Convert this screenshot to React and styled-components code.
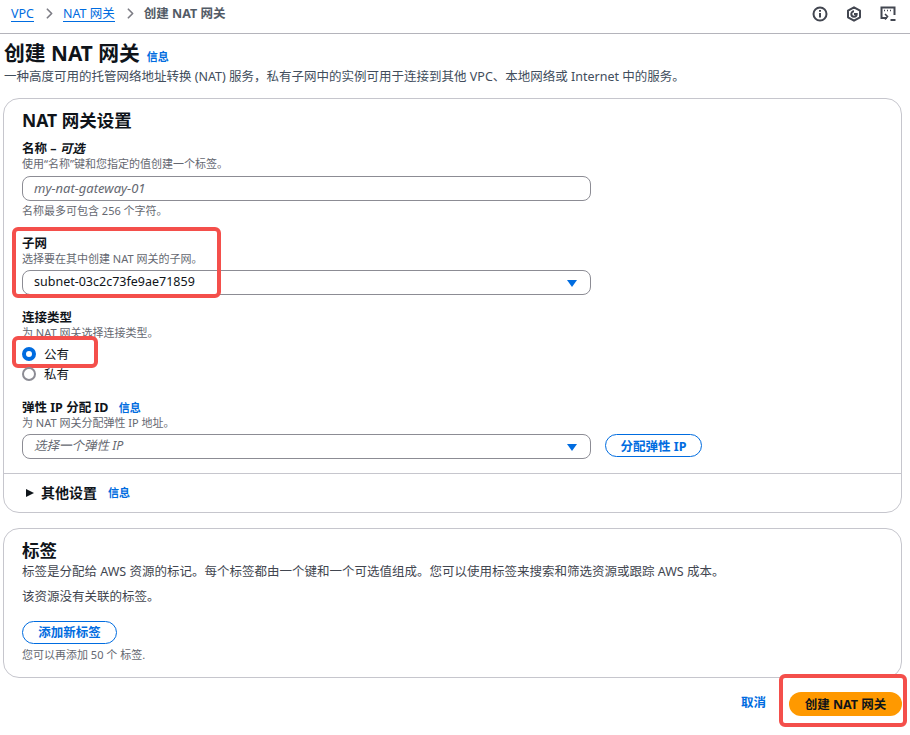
import React from 'react';
import styled, { createGlobalStyle } from 'styled-components';
import { ChevronRight } from 'lucide-react';

const GlobalStyle = createGlobalStyle`
  html, body {
    margin: 0;
    padding: 0;
    background: #fff;
  }
  body {
    font-family: "Noto Sans", "Noto Sans CJK SC", sans-serif;
    color: #0f141a;
  }
  * {
    box-sizing: border-box;
  }
`;

const Page = styled.div`
  width: 910px;
  height: 735px;
  overflow: hidden;
  position: relative;
`;

const TopBar = styled.header`
  height: 34px;
  display: flex;
  align-items: center;
  justify-content: space-between;
  border-bottom: 1px solid #b4b4bb;
  padding: 0 14px 6px 11px;
`;

const Crumbs = styled.nav`
  display: flex;
  align-items: center;
  font-size: 12.5px;
  line-height: 16px;
`;

const CrumbLink = styled.a`
  color: #006ce0;
  border-bottom: 1px solid #006ce0;
  line-height: 15px;
`;

const CrumbSep = styled.span`
  display: flex;
  color: #7d7d85;
  margin: 0 5px 0 7px;
`;

const CrumbCurrent = styled.span`
  color: #525b66;
  font-weight: 700;
`;

const TopIcons = styled.div`
  display: flex;
  align-items: center;
  gap: 18px;
  color: #424650;
`;

const Intro = styled.div`
  padding: 4px 0 0 4px;
`;

const HeadingRow = styled.div`
  display: flex;
  align-items: baseline;
  gap: 7px;
`;

const Heading = styled.h1`
  margin: 0;
  font-size: 20.8px;
  line-height: 30px;
  font-weight: 700;
`;

const Info = styled.a`
  color: #006ce0;
  font-size: 11px;
  font-weight: 700;
  line-height: 14px;
  margin-left: ${p => p.$left || 0}px;
`;

const IntroText = styled.p`
  margin: 0;
  font-size: 12.5px;
  line-height: 17px;
  color: #414d5c;
`;

const Card = styled.section`
  margin: ${p => p.$top}px 8px 0 3px;
  border: 1px solid #c6c6cd;
  border-radius: 16px;
  height: ${p => p.$height}px;
`;

const CardBody = styled.div`
  padding: ${p => p.$top}px 19px 0 18px;
`;

const CardTitle = styled.h2`
  margin: 0;
  font-size: 17.5px;
  line-height: 22px;
  font-weight: 700;
`;

const Field = styled.div`
  position: relative;
  margin-top: ${p => p.$top}px;
`;

const Label = styled.div`
  font-size: 12.5px;
  line-height: 16px;
  font-weight: 700;

  em {
    font-style: italic;
  }
`;

const Desc = styled.div`
  font-size: 11px;
  line-height: 14px;
  color: #656871;
`;

const Hint = styled(Desc)`
  margin-top: ${p => p.$top || 3}px;
`;

const ControlRow = styled.div`
  display: flex;
  align-items: flex-start;
  gap: 14px;
  margin-top: ${p => p.$top || 5}px;
`;

const Control = styled.div`
  width: 569px;
  height: 25px;
  display: flex;
  align-items: center;
  justify-content: space-between;
  padding: 0 12px 1px 11px;
  border: 1px solid #8c8c94;
  border-radius: 8px;
  font-size: ${p => p.$size || 12.5}px;
  line-height: 16px;
  color: ${p => (p.$placeholder ? '#656871' : '#0f141a')};
  font-style: ${p => (p.$placeholder ? 'italic' : 'normal')};
`;

const Caret = styled.span`
  width: 0;
  height: 0;
  margin: 2px 1px 0 0;
  border-left: 5px solid transparent;
  border-right: 5px solid transparent;
  border-top: 7px solid #006ce0;
`;

const OutlineButton = styled.button`
  height: ${p => p.$height}px;
  width: ${p => p.$width}px;
  padding: 0 0 1px;
  background: #fff;
  border: 1px solid #006ce0;
  border-radius: 20px;
  color: #006ce0;
  font-family: inherit;
  font-size: 12.5px;
  font-weight: 700;
`;

const RadioGroup = styled.div`
  display: flex;
  flex-direction: column;
  gap: 3px;
  margin-top: 5px;
`;

const RadioRow = styled.label`
  position: relative;
  display: flex;
  align-items: center;
  gap: 8px;
  height: 17px;
  font-size: 12.5px;
  color: #0f141a;
`;

const RadioDot = styled.span`
  width: 14px;
  height: 14px;
  border-radius: 50%;
  border: ${p => (p.$on ? '4px solid #006ce0' : '2px solid #8c8c94')};
  background: #fff;
`;

const Highlight = styled.span`
  position: absolute;
  top: ${p => p.$top}px;
  left: ${p => p.$left}px;
  width: ${p => p.$width}px;
  height: ${p => p.$height}px;
  border: 4px solid #f44f4b;
  border-radius: 6px;
  pointer-events: none;
`;

const Divider = styled.hr`
  margin: 14px 0 0;
  border: 0;
  border-top: 1px solid #c6c6cd;
`;

const Expander = styled.div`
  display: flex;
  align-items: center;
  height: 38px;
  padding-left: 22px;
  font-size: 14px;
  font-weight: 700;
  gap: 11px;
`;

const ExpanderLabel = styled.span`
  display: flex;
  align-items: center;
  gap: 7px;
  line-height: 18px;
`;

const Arrow = styled.span`
  width: 0;
  height: 0;
  border-top: 4.5px solid transparent;
  border-bottom: 4.5px solid transparent;
  border-left: 8px solid #0f141a;
`;

const BodyText = styled.p`
  margin: ${p => p.$top}px 0 0;
  font-size: 12.5px;
  line-height: 16px;
  color: #424650;
`;

const Footer = styled.footer`
  position: relative;
  display: flex;
  justify-content: flex-end;
  align-items: center;
  gap: 23px;
  margin-top: 14px;
  padding-right: 8px;
`;

const TextButton = styled.a`
  color: #006ce0;
  font-size: 12.5px;
  line-height: 16px;
  font-weight: 700;
  margin-bottom: 2px;
`;

const PrimaryButton = styled.button`
  width: 113px;
  height: 24px;
  padding: 0 0 2px;
  border: 0;
  border-radius: 20px;
  background: #ff9900;
  color: #0f141a;
  font-family: inherit;
  font-size: 12.5px;
  font-weight: 700;
`;

function InfoIcon() {
  return (
    <svg width="16" height="16" viewBox="0 0 16 16" fill="none" stroke="currentColor" strokeWidth="2">
      <circle cx="8" cy="8" r="6.5" />
      <path d="M8 7v4.5M8 4v1.8" />
    </svg>
  );
}

function HexIcon() {
  return (
    <svg width="16" height="16" viewBox="0 0 16 16" fill="none" stroke="currentColor" strokeWidth="2">
      <path d="M8 1.3 14 4.7v6.6L8 14.7 2 11.3V4.7Z" strokeLinejoin="round" />
      <path d="M8 5.3a2.7 2.7 0 1 0 2.7 2.7L8 8" />
    </svg>
  );
}

function ShellIcon() {
  return (
    <svg width="16" height="16" viewBox="0 0 16 16" fill="none" stroke="currentColor" strokeWidth="2">
      <path d="M7 12H1.5V1.5h13V9" />
      <path d="M4 4.5h1M7 4.5h1M10 4.5h1" strokeWidth="1.4" />
      <path d="m5 8 2.5 2.5L5 13.5" strokeWidth="1.6" />
      <path d="M10.5 14h5" />
    </svg>
  );
}

export default function App() {
  return (
    <Page>
      <GlobalStyle />
      <TopBar>
        <Crumbs>
          <CrumbLink>VPC</CrumbLink>
          <CrumbSep><ChevronRight size={17} strokeWidth={2.4} /></CrumbSep>
          <CrumbLink>NAT 网关</CrumbLink>
          <CrumbSep><ChevronRight size={17} strokeWidth={2.4} /></CrumbSep>
          <CrumbCurrent>创建 NAT 网关</CrumbCurrent>
        </Crumbs>
        <TopIcons>
          <InfoIcon />
          <HexIcon />
          <ShellIcon />
        </TopIcons>
      </TopBar>

      <Intro>
        <HeadingRow>
          <Heading>创建 NAT 网关</Heading>
          <Info>信息</Info>
        </HeadingRow>
        <IntroText>一种高度可用的托管网络地址转换 (NAT) 服务，私有子网中的实例可用于连接到其他 VPC、本地网络或 Internet 中的服务。</IntroText>
      </Intro>

      <Card $top={13} $height={415}>
        <CardBody $top={10}>
          <CardTitle>NAT 网关设置</CardTitle>
          <Field $top={10}>
            <Label>名称 – <em>可选</em></Label>
            <Desc>使用“名称”键和您指定的值创建一个标签。</Desc>
            <ControlRow>
              <Control $placeholder $size={13}>my-nat-gateway-01</Control>
            </ControlRow>
            <Hint>名称最多可包含 256 个字符。</Hint>
          </Field>
          <Field $top={18}>
            <Highlight $top={-9} $left={-10} $width={209} $height={71} />
            <Label>子网</Label>
            <Desc>选择要在其中创建 NAT 网关的子网。</Desc>
            <ControlRow $top={4}>
              <Control>subnet-03c2c73fe9ae71859<Caret /></Control>
            </ControlRow>
          </Field>
          <Field $top={15}>
            <Label>连接类型</Label>
            <Desc>为 NAT 网关选择连接类型。</Desc>
            <RadioGroup>
              <RadioRow>
                <Highlight $top={-9} $left={-10} $width={86} $height={32} />
                <RadioDot $on />公有
              </RadioRow>
              <RadioRow><RadioDot />私有</RadioRow>
            </RadioGroup>
          </Field>
          <Field $top={18}>
            <Label>弹性 IP 分配 ID <Info $left={7}>信息</Info></Label>
            <Desc>为 NAT 网关分配弹性 IP 地址。</Desc>
            <ControlRow $top={4}>
              <Control $placeholder>选择一个弹性 IP<Caret /></Control>
              <OutlineButton $width={97} $height={23}>分配弹性 IP</OutlineButton>
            </ControlRow>
          </Field>
        </CardBody>
        <Divider />
        <Expander>
          <ExpanderLabel><Arrow />其他设置</ExpanderLabel>
          <Info>信息</Info>
        </Expander>
      </Card>

      <Card $top={15} $height={150}>
        <CardBody $top={10}>
          <CardTitle>标签</CardTitle>
          <BodyText $top={3}>标签是分配给 AWS 资源的标记。每个标签都由一个键和一个可选值组成。您可以使用标签来搜索和筛选资源或跟踪 AWS 成本。</BodyText>
          <BodyText $top={9}>该资源没有关联的标签。</BodyText>
          <Field $top={15}>
            <OutlineButton $width={95} $height={23}>添加新标签</OutlineButton>
            <Hint $top={4}>您可以再添加 50 个 标签.</Hint>
          </Field>
        </CardBody>
      </Card>

      <Footer>
        <TextButton>取消</TextButton>
        <PrimaryButton>创建 NAT 网关</PrimaryButton>
        <Highlight $top={-18} $left={779} $width={128} $height={53} />
      </Footer>
    </Page>
  );
}
